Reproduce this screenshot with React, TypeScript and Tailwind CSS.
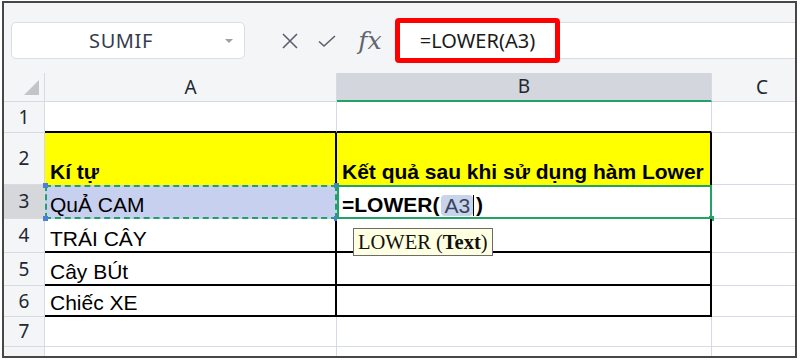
import React from "react";

const sans = "font-['Liberation_Sans',Arial,sans-serif]";
const ui = "font-['Noto_Sans','Open_Sans',sans-serif]";

function RowHead({ n, active }: { n: string; active?: boolean }) {
  return (
    <div
      className={`w-[41px] shrink-0 flex items-center justify-center border-r border-b border-[#d5dae6] ${ui} text-[19px] text-[#222733] ${
        active ? "bg-[#d6d7da]" : "bg-[#f4f5f7]"
      }`}
    >
      {n}
    </div>
  );
}

function CCell() {
  return <div className="w-[100px] shrink-0 border-b border-[#d5dae6] bg-white" />;
}

export default function App() {
  const bodyText = `${sans} text-[21px] leading-[24px] text-black whitespace-nowrap`;
  return (
    <div className="w-[800px] h-[361px] bg-white overflow-hidden">
      <div className="ml-[2px] mt-[1px] w-[795px] h-[357px] border-2 border-[#474747] bg-[#f4f5f7] overflow-hidden flex flex-col">
        {/* Formula bar */}
        <div className="h-[70px] shrink-0 pt-[5px] flex items-center">
          <div className="ml-[7px] w-[234px] h-[37px] rounded-[5px] border border-[#dcdee3] bg-white flex items-center">
            <div className={`flex-1 text-center pl-[10px] ${ui} text-[20px] tracking-[0.6px] text-[#363c4c]`}>SUMIF</div>
            <svg width="22" height="10" viewBox="0 0 22 10" className="mr-[2px]">
              <polygon points="5,3 13,3 9,7" fill="#9aa0a8" />
            </svg>
          </div>
          <div className="ml-[30px] w-[30px] flex items-center justify-center">
            <svg width="18" height="18" viewBox="0 0 18 18">
              <path d="M2 2 L16 16 M16 2 L2 16" stroke="#5a606c" strokeWidth="1.6" fill="none" />
            </svg>
          </div>
          <div className="ml-[7px] w-[30px] flex items-center justify-center">
            <svg width="20" height="16" viewBox="0 0 20 16">
              <path d="M2 8.5 L7 13 L18 3" stroke="#5a606c" strokeWidth="1.6" fill="none" />
            </svg>
          </div>
          <div className={`ml-[13px] w-[30px] flex items-center justify-center font-['DejaVu_Serif',serif] italic text-[25px] text-[#5f6571] leading-none`}>
            fx
          </div>
          <div className="ml-[10px] w-[165px] h-[45px] shrink-0 rounded-[4px] border-[5px] border-[#ff0000] bg-white flex items-center justify-center">
            <span className={`${ui} text-[20px] text-[#1a1a1a]`}>=LOWER(A3)</span>
          </div>
          <div className="flex-1 h-[37px] border-y border-[#d9dbe0] bg-white" />
        </div>

        {/* Grid */}
        <div className="flex-1 flex flex-col overflow-hidden">
          {/* column headers */}
          <div className="h-[29px] shrink-0 flex">
            <div className="w-[41px] shrink-0 border-r border-b border-[#d5dae6] flex items-end justify-end pr-[5px] pb-[6px]">
              <svg width="15" height="15" viewBox="0 0 15 15">
                <polygon points="15,0 15,15 0,15" fill="#c2c4c8" />
              </svg>
            </div>
            <div className={`w-[292px] shrink-0 border-r border-b border-[#d5dae6] flex items-center justify-center ${ui} text-[19px] text-[#222733]`}>A</div>
            <div className={`w-[375px] shrink-0 bg-[#d3d6dc] border-r border-r-[#d5dae6] border-b-2 border-b-[#21a366] flex items-center justify-center ${ui} text-[19px] text-[#222733]`}>B</div>
            <div className={`w-[100px] shrink-0 border-b border-[#d5dae6] flex items-center justify-center ${ui} text-[19px] text-[#222733]`}>C</div>
          </div>

          {/* row 1 */}
          <div className="h-[31px] shrink-0 flex">
            <RowHead n="1" />
            <div className="w-[292px] shrink-0 bg-white border-r border-r-[#d5dae6] border-b-2 border-b-black" />
            <div className="w-[375px] shrink-0 bg-white border-r border-r-[#d5dae6] border-b-2 border-b-black" />
            <CCell />
          </div>

          {/* row 2 */}
          <div className="h-[52px] shrink-0 flex">
            <RowHead n="2" />
            <div className={`w-[292px] shrink-0 bg-[#ffff00] border-r-2 border-black flex items-end pl-[5px] pb-[1px] ${bodyText} font-bold`}>Kí tự</div>
            <div className={`w-[375px] shrink-0 bg-[#ffff00] border-r-2 border-black flex items-end pl-[5px] pb-[1px] ${bodyText} font-bold`}>Kết quả sau khi sử dụng hàm Lower</div>
            <CCell />
          </div>

          {/* row 3 */}
          <div className="h-[34px] shrink-0 flex">
            <RowHead n="3" active />
            <div className={`relative w-[292px] shrink-0 bg-[#c7d0ee] border-2 border-dashed border-[#22a06b] flex items-end pl-[3px] ${bodyText} text-[#1f2849]`}>
              QuẢ CAM
              <span className="absolute -left-[4px] -top-[4px] w-[5px] h-[5px] bg-[#4a7fd6]" />
              <span className="absolute -right-[4px] -top-[4px] w-[5px] h-[5px] bg-[#4a7fd6]" />
              <span className="absolute -left-[4px] -bottom-[4px] w-[5px] h-[5px] bg-[#4a7fd6]" />
              <span className="absolute -right-[4px] -bottom-[4px] w-[5px] h-[5px] bg-[#4a7fd6]" />
            </div>
            <div className={`relative w-[375px] shrink-0 bg-white border-2 border-[#21a366] flex items-end pl-[3px] ${bodyText}`}>
              <span className="font-bold">=LOWER(</span>
              <span className="ml-[2px] mb-[1px] px-[3px] rounded-[4px] bg-[#c9d3ea] text-[#3a4460] leading-[21px]">A3</span>
              <span className="w-px h-[21px] bg-black mb-[1px]" />
              <span className="font-bold ml-[2px]">)</span>
              <span className="absolute -right-[4px] -bottom-[4px] w-[5px] h-[5px] bg-[#21a366]" />
            </div>
            <CCell />
          </div>

          {/* row 4 */}
          <div className="h-[34px] shrink-0 flex">
            <RowHead n="4" />
            <div className={`w-[292px] shrink-0 bg-white border-r-2 border-b-2 border-black flex items-end pl-[5px] ${bodyText}`}>TRÁI CÂY</div>
            <div className="relative w-[375px] shrink-0 bg-white border-r-2 border-b-2 border-black">
              <div className="absolute left-[16px] top-[9px] z-10 h-[28px] px-[4px] border border-[#6b6b6b] bg-[#ffffe1] flex items-center font-['Liberation_Serif','Times_New_Roman',serif] text-[20.5px] text-[#111] whitespace-nowrap">
                LOWER (<span className="font-bold">Text</span>)
              </div>
            </div>
            <CCell />
          </div>

          {/* row 5 */}
          <div className="h-[33px] shrink-0 flex">
            <RowHead n="5" />
            <div className={`w-[292px] shrink-0 bg-white border-r-2 border-b-2 border-black flex items-end pl-[5px] ${bodyText}`}>Cây BÚt</div>
            <div className="w-[375px] shrink-0 bg-white border-r-2 border-b-2 border-black" />
            <CCell />
          </div>

          {/* row 6 */}
          <div className="h-[31px] shrink-0 flex">
            <RowHead n="6" />
            <div className={`w-[292px] shrink-0 bg-white border-r-2 border-b-2 border-black flex items-end pl-[5px] ${bodyText}`}>Chiếc XE</div>
            <div className="w-[375px] shrink-0 bg-white border-r-2 border-b-2 border-black" />
            <CCell />
          </div>

          {/* row 7 */}
          <div className="h-[30px] shrink-0 flex">
            <RowHead n="7" />
            <div className="w-[292px] shrink-0 bg-white border-r border-b border-[#d5dae6]" />
            <div className="w-[375px] shrink-0 bg-white border-r border-b border-[#d5dae6]" />
            <CCell />
          </div>

          {/* row 8 (partial) */}
          <div className="flex-1 flex">
            <div className="w-[41px] shrink-0 border-r border-[#d5dae6] bg-[#f4f5f7]" />
            <div className="w-[292px] shrink-0 bg-white border-r border-[#d5dae6]" />
            <div className="w-[375px] shrink-0 bg-white border-r border-[#d5dae6]" />
            <div className="w-[100px] shrink-0 bg-white" />
          </div>
        </div>
      </div>
    </div>
  );
}
